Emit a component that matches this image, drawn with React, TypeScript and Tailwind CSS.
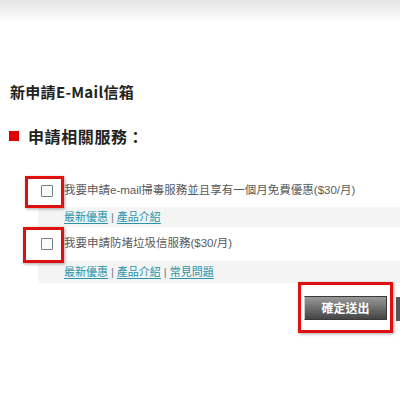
import React from "react";

const font = { fontFamily: '"Noto Sans CJK TC", "Noto Sans", Arial, sans-serif' };
const rowFont = { fontFamily: '"Liberation Sans", "Noto Sans CJK TC", Arial, sans-serif' };

function Box() {
  return <span className="block w-[12px] h-[12px] border border-[#6f7f92] bg-[#fbfbfb] rounded-[1px]" />;
}

function Links({ items }: { items: string[] }) {
  return (
    <div className="flex items-center text-[11px] text-[#2a93a8]" style={rowFont}>
      {items.map((t, i) => (
        <React.Fragment key={t}>
          {i > 0 && <span className="text-[#777] mx-[3px] no-underline">|</span>}
          <span className="underline underline-offset-2">{t}</span>
        </React.Fragment>
      ))}
    </div>
  );
}

export default function App() {
  return (
    <div className="w-[400px] h-[400px] bg-white overflow-hidden relative" style={font}>
      <div className="h-[22px] bg-gradient-to-b from-[#e4e4e4] to-white" />
      <div className="pl-[10px] pt-[60px] text-[15px] font-bold text-[#222] leading-[20px] tracking-[0.3px]">新申請E-Mail信箱</div>
      <div className="flex items-center pl-[9px] mt-[24px] leading-[20px]">
        <span className="w-[10px] h-[10px] bg-[#e00000] mr-[9px]" />
        <span className="text-[16px] font-bold text-[#222] tracking-[0.6px]">申請相關服務：</span>
      </div>

      <div className="mt-[29px]">
        <div className="relative flex items-center h-[32px] pl-[41px]">
          <span className="absolute left-[25px] top-[1px] w-[39px] h-[32px] border-[3px] border-[#e01010] shadow-[1px_1px_3px_rgba(0,0,0,0.35)]" />
          <Box />
          <span className="ml-[11px] text-[11.5px] text-[#5a5a5a]" style={rowFont}>我要申請e-mail掃毒服務並且享有一個月免費優惠($30/月)</span>
        </div>
        <div className="h-[20px] bg-[#f4f4f4] ml-[38px] pl-[26px] flex items-center">
          <Links items={["最新優惠", "產品介紹"]} />
        </div>
        <div className="relative flex items-center h-[34px] pl-[41px]">
          <span className="absolute left-[23px] top-[0px] w-[41px] h-[36px] border-[3px] border-[#e01010] shadow-[1px_1px_3px_rgba(0,0,0,0.35)]" />
          <Box />
          <span className="ml-[11px] text-[11.5px] text-[#5a5a5a]" style={rowFont}>我要申請防堵垃圾信服務($30/月)</span>
        </div>
        <div className="h-[22px] bg-[#f4f4f4] ml-[38px] pl-[26px] flex items-center">
          <Links items={["最新優惠", "產品介紹", "常見問題"]} />
        </div>
      </div>

      <div className="flex justify-end mt-[-1px]">
        <div className="relative w-[95px] h-[51px] border-[3px] border-[#e01010] shadow-[1px_1px_3px_rgba(0,0,0,0.35)] mr-[7px] flex items-center">
          <div className="ml-[3px] w-[83px] h-[24px] bg-gradient-to-b from-[#9a9a9a] to-[#454545] border border-[#3a3a3a] border-l-[#cfcfcf] flex items-center justify-center text-white text-[12px] font-bold">
            確定送出
          </div>
        </div>
        <div className="absolute right-0 top-[297px] w-[4px] h-[24px] bg-[#555]" />
      </div>
    </div>
  );
}
